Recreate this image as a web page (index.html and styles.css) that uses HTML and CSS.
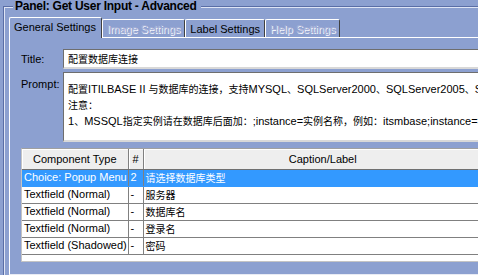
FILE: index.html
```html
<!DOCTYPE html>
<html lang="zh">
<head>
  <meta charset="UTF-8"/>
  <title>Panel: Get User Input - Advanced</title>
  <link rel="stylesheet" href="styles.css">
</head>
<body>

<fieldset class="panel">
  <legend>Panel: Get User Input - Advanced</legend>

  <div class="tab-strip">
    <span class="tab active">General Settings</span>
    <span class="tab disabled">Image Settings</span>
    <span class="tab">Label Settings</span>
    <span class="tab disabled">Help Settings</span>
  </div>

  <div class="tab-body">
    <div class="form">
      <label class="form-label title-label">Title:</label>
      <div class="field title-field"><span class="cn">配置数据库连接</span></div>

      <label class="form-label prompt-label">Prompt:</label>
      <div class="field prompt-field">
        <div><span class="cn">配置</span>ITILBASE II <span class="cn">与数据库的连接，支持</span>MYSQL<span class="cn">、</span>SQLServer2000<span class="cn">、</span>SQLServer2005<span class="cn">、</span>SQLServer2008<span class="cn">、</span>ORACLE<span class="cn">数据库</span></div>
        <div><span class="cn">注意：</span></div>
        <div>1<span class="cn">、</span>MSSQL<span class="cn">指定实例请在数据库后面加：</span>;instance=<span class="cn">实例名称，例如：</span>itsmbase;instance=SQLEXPRESS</div>
      </div>
    </div>

    <div class="table-pane">
      <table class="components">
        <thead>
          <tr>
            <th class="col-type">Component Type</th>
            <th class="col-num">#</th>
            <th class="col-caption">Caption/Label</th>
          </tr>
        </thead>
        <tbody>
          <tr class="selected">
            <td>Choice: Popup Menu</td>
            <td>2</td>
            <td><span class="cn">请选择数据库类型</span></td>
          </tr>
          <tr>
            <td>Textfield (Normal)</td>
            <td>-</td>
            <td><span class="cn">服务器</span></td>
          </tr>
          <tr>
            <td>Textfield (Normal)</td>
            <td>-</td>
            <td><span class="cn">数据库名</span></td>
          </tr>
          <tr>
            <td>Textfield (Normal)</td>
            <td>-</td>
            <td><span class="cn">登录名</span></td>
          </tr>
          <tr>
            <td>Textfield (Shadowed)</td>
            <td>-</td>
            <td><span class="cn">密码</span></td>
          </tr>
        </tbody>
      </table>
    </div>
  </div>
</fieldset>

</body>
</html>
```

FILE: styles.css
```css
body {
  margin: 0;
  width: 478px;
  height: 275px;
  overflow: hidden;
  background-color: #8ca0d0;
  font-family: "Liberation Sans", Arial, sans-serif;
  font-size: 11px;
  color: #000;
}

.cn {
  font-family: "Noto Sans CJK SC", sans-serif;
  font-size: 10px;
}

/* titled border */
.panel {
  width: 620px;
  margin: 0 0 0 3px;
  padding: 0 0 0 5px;
  border: 1px solid #5a6ea6;
  box-shadow: inset 1px 1px 0 #dfe5f5;
  min-inline-size: 0;
}

.panel legend {
  margin-left: 4px;
  padding: 1px 4px 0 2px;
  line-height: 11px;
  font-size: 12px;
  font-weight: bold;
  letter-spacing: -0.25px;
  background-color: #8ca0d0;
}

/* tabs */
.tab-strip {
  display: flex;
  align-items: flex-end;
  margin-top: 5px;
}

.tab {
  position: relative;
  height: 18px;
  box-sizing: border-box;
  padding: 2px 4px 0 4px;
  line-height: 15px;
  border: 1px solid #fff;
  border-right-color: #404040;
  border-bottom: none;
  border-radius: 2px 2px 0 0;
  white-space: nowrap;
}

.tab.active {
  height: 21px;
  margin-bottom: -1px;
  padding-right: 5px;
  background-color: #8ca0d0;
}

.tab.disabled {
  color: #a4afd6;
  text-shadow: 1px 1px 0 #f4f6fc;
}

.tab-body {
  border-top: 1px solid #fff;
  border-left: 1px solid #fff;
  border-bottom: 1px solid #e8ebf4;
  padding: 11px 0 12px 11px;
}

/* form */
.form {
  display: grid;
  grid-template-columns: 42px 540px;
  row-gap: 3px;
}

.form-label {
  line-height: 15px;
}

.title-label {
  padding-top: 3px;
}

.prompt-label {
  padding-top: 5px;
}

.field {
  box-sizing: border-box;
  background-color: #fff;
  border: 1px solid #6e6e6e;
  border-right-color: #dcdcdc;
  border-bottom: 2px solid #d8d8d8;
  padding-left: 4px;
  white-space: nowrap;
  overflow: hidden;
}

.title-field {
  height: 20px;
  line-height: 17px;
}

.prompt-field {
  height: 70px;
  padding-top: 8px;
  line-height: 15px;
}

/* component table */
.table-pane {
  box-sizing: border-box;
  height: 114px;
  margin-top: 6px;
  background-color: #fff;
  border-top: 1px solid #a0a0a0;
  border-left: 1px solid #c4c4c4;
  border-bottom: 1px solid #c4c4c4;
}

.components {
  border-collapse: collapse;
  table-layout: fixed;
  width: 481px;
}

.components th {
  box-sizing: border-box;
  height: 20px;
  padding: 1px 0 0 0;
  font-weight: normal;
  text-align: center;
  background-color: #eeeeee;
  border-right: 1px solid #808080;
  border-bottom: 1px solid #707070;
  box-shadow: inset 1px 1px 0 #fff;
  white-space: nowrap;
}

.components .col-type {
  width: 106px;
}

.components .col-num {
  width: 15px;
}

.components td {
  box-sizing: border-box;
  height: 16px;
  padding: 0 0 0 2px;
  line-height: 15px;
  border-right: 1px solid #808080;
  border-bottom: 1px solid #808080;
  white-space: nowrap;
  overflow: hidden;
}

.components tr.selected td {
  background-color: #3399ff;
  color: #fff;
  border-bottom-color: #3399ff;
}
```
